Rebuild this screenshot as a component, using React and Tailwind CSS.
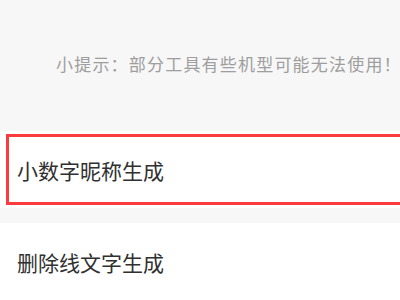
import React from "react";

const tools = [
  { key: "nick", label: "小数字昵称生成", active: true },
  { key: "strike", label: "删除线文字生成", active: false },
];

export default function App() {
  return (
    <div
      className="w-[400px] h-[300px] overflow-hidden bg-[#f7f7f7]"
      style={{ fontFamily: '"Noto Sans CJK SC", "Noto Sans", sans-serif' }}
    >
      {/* Tip */}
      <div className="h-[131px] flex items-center pl-[56px] pb-[1px]">
        <p className="text-[17px] tracking-[1.2px] leading-none text-[#9e9e9e] -mt-[3px] whitespace-nowrap">
          小提示：部分工具有些机型可能无法使用！
        </p>
      </div>

      {/* Tool list */}
      <div className="flex flex-col gap-[15px]">
        {tools.map((t) => (
          <div key={t.key} className="bg-white h-[77px] py-[3px] pl-[6px]">
            <div
              className={`h-full -mr-[10px] flex items-center pl-[8px] ${
                t.active ? "border-[3px] border-[#fb3b3e]" : "border-[3px] border-transparent"
              }`}
            >
              <span className="text-[21px] leading-none text-[#303030] mt-[2px]">{t.label}</span>
            </div>
          </div>
        ))}
      </div>
    </div>
  );
}
